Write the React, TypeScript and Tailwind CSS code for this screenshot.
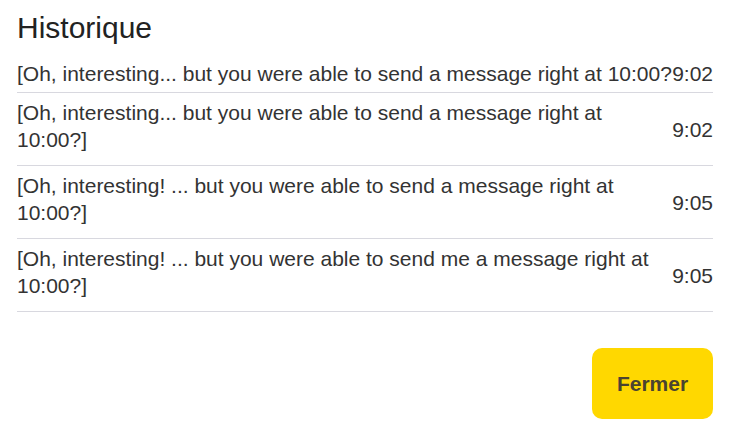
export default function App() {
  const rows = [
    { text: "[Oh, interesting... but you were able to send a message right at 10:00?", time: "9:02", single: true },
    { text: "[Oh, interesting... but you were able to send a message right at 10:00?]", time: "9:02" },
    { text: "[Oh, interesting! ... but you were able to send a message right at 10:00?]", time: "9:05" },
    { text: "[Oh, interesting! ... but you were able to send me a message right at 10:00?]", time: "9:05" },
  ];
  return (
    <div
      className="w-[729px] h-[444px] bg-white pl-[17px] pr-[16px] pt-[10px] flex flex-col"
      style={{ fontFamily: '"Liberation Sans", Arial, sans-serif' }}
    >
      <h1 className="text-[30px] leading-[36px] text-[#222222] mb-[14px]">Historique</h1>
      <div className="flex flex-col">
        {rows.map((r, i) => (
          <div
            key={i}
            className="flex items-center justify-between border-b border-[#d8d8df] text-[21px] leading-[27px] text-[#333333]"
          >
            <div className={r.single ? "whitespace-nowrap pb-[5px]" : "flex-1 pr-[16px] pt-[6px] pb-[12px]"}>{r.text}</div>
            <div className={r.single ? "shrink-0 pb-[5px]" : "shrink-0"}>{r.time}</div>
          </div>
        ))}
      </div>
      <div className="flex justify-end mt-[36px]">
        <button className="w-[121px] h-[71px] rounded-[10px] bg-[#ffd800] text-[#4a4330] font-bold text-[21px]">
          Fermer
        </button>
      </div>
    </div>
  );
}
